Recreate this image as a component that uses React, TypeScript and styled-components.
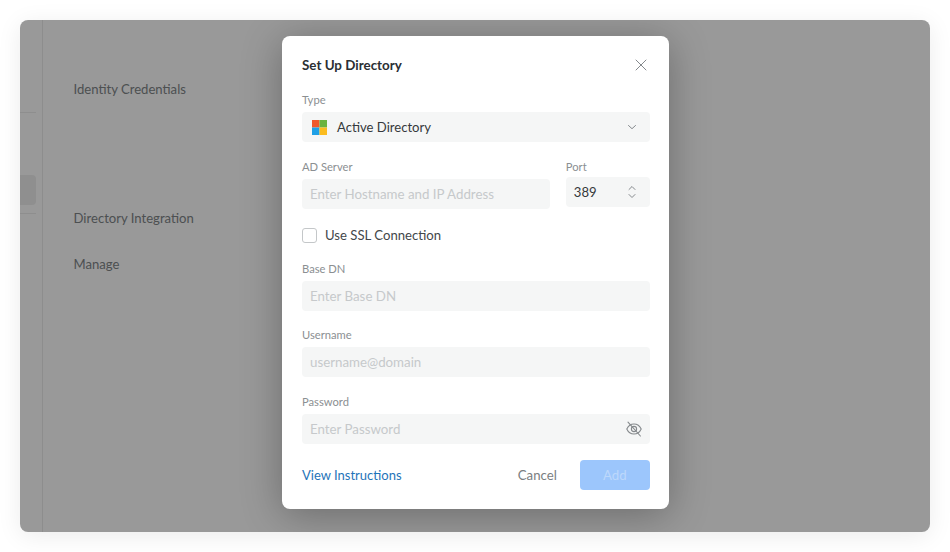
import React from "react";
import styled, { createGlobalStyle } from "styled-components";

const Global = createGlobalStyle`
  html, body { margin: 0; padding: 0; background: #fff; }
  body { font-family: "Lato", "Liberation Sans", sans-serif; }
  #root { width: 950px; height: 552px; overflow: hidden; }
`;
const Page = styled.div`
  width: 950px; height: 552px; padding: 20px; box-sizing: border-box; background: #fff;
`;
const Win = styled.div`
  position: relative; display: flex; width: 910px; height: 512px; border-radius: 8px;
  overflow: hidden; background: #fff; box-shadow: 0 4px 24px rgba(0,0,0,.08);
`;
const Sidebar = styled.aside`
  display: flex; flex-direction: column; width: 22px; flex: none; border-right: 1px solid #ececec; box-sizing: content-box;
`;
const SideRow = styled.div<{ $h: number; $line?: boolean; $active?: boolean; $mt?: number }>`
  width: 16px; height: ${p => p.$h}px; margin-top: ${p => p.$mt ?? 0}px; box-sizing: border-box; flex: none;
  border-bottom: ${p => (p.$line ? "1px solid #ededed" : "none")};
  background: ${p => (p.$active ? "#efefef" : "transparent")};
  border-radius: ${p => (p.$active ? "0 4px 4px 0" : "0")};
`;
const Content = styled.main`
  display: flex; flex-direction: column; padding: 60px 0 0 30.5px; flex: 1;
`;
const Section = styled.div<{ $mt: number }>`
  margin-top: ${p => p.$mt}px; font-size: 13.1px; line-height: 18px; color: #808588; height: 18px;
`;
const Overlay = styled.div`
  position: absolute; inset: 0; background: rgba(0,0,0,.4);
`;
const Modal = styled.div`
  position: absolute; left: 262.4px; top: 16px; width: 386.8px; height: 473px; box-sizing: border-box;
  padding: 19px 19.4px 0 19.6px; background: #fff; border-radius: 8px;
  box-shadow: 0 6px 40px rgba(0,0,0,.3); display: flex; flex-direction: column;
`;
const Header = styled.div`
  display: flex; align-items: center; justify-content: space-between; height: 20px; margin-bottom: 17px;
`;
const Title = styled.h2`
  margin: 0; font-size: 13.4px; line-height: 20px; font-weight: 700; color: #2b2f33;
`;
const IconBtn = styled.span`
  display: inline-flex; color: #85898d; line-height: 0;
`;
const CloseBtn = styled(IconBtn)`
  margin-right: 3px;
`;
const Label = styled.label`
  display: block; height: 16px; font-size: 11.2px; line-height: 16px; color: #8b8f92;
`;
const Field = styled.div<{ $gap?: number; $w?: number; $mt?: number }>`
  display: flex; flex-direction: column; gap: ${p => p.$gap ?? 4}px;
  margin-top: ${p => p.$mt ?? 0}px;
  ${p => (p.$w ? `width: ${p.$w}px; flex: none;` : "flex: 1;")}
`;
const Stack = styled.div`
  display: flex; flex-direction: column; gap: 16px;
`;
const Row = styled.div`
  display: flex; justify-content: space-between; align-items: flex-start; margin-top: 1px;
`;
const Box = styled.div`
  display: flex; align-items: center; height: 30px; box-sizing: border-box; padding: 0 8px; border-radius: 4px;
  background: #f5f6f6; font-size: 13.1px; color: #35393c;
`;
const Placeholder = styled.span`
  flex: 1; color: #c6c9cb; font-size: 13.3px;
`;
const Value = styled.span`
  flex: 1;
`;
const Logo = styled.svg`
  margin: 0 10px 0 2px; flex: none;
`;
const Check = styled.label`
  display: flex; align-items: center; gap: 8px; height: 20px; font-size: 13.15px; color: #43474a;
`;
const Tick = styled.span`
  width: 15px; height: 15px; box-sizing: border-box; border: 1px solid #c4c7c9; border-radius: 3px; flex: none;
`;
const Footer = styled.div`
  display: flex; align-items: center; margin-top: 16px; height: 30px;
`;
const Link = styled.a`
  flex: 1; color: #1f74b9; font-size: 13px;
`;
const Cancel = styled.button`
  border: 0; background: none; padding: 0; font: inherit; font-size: 13.2px; color: #7a7e81; margin-right: 23px;
`;
const Add = styled.button`
  width: 70px; height: 30px; border: 0; border-radius: 4px; background: #9cc6fc; color: #bcd8fb;
  font: inherit; font-size: 13.2px; padding: 0;
`;
const EndGap = styled.span<{ $w: number }>`
  width: ${p => p.$w}px; flex: none;
`;

const Chevrons = () => (
  <svg width="10" height="16" viewBox="0 0 10 16" fill="none" stroke="#85898d" strokeWidth="1" strokeLinecap="round" strokeLinejoin="round">
    <path d="M2 5.5 5 2.5l3 3" />
    <path d="M2 10.5l3 3 3-3" />
  </svg>
);
const Chevron = () => (
  <svg width="10" height="10" viewBox="0 0 10 10" fill="none" stroke="#85898d" strokeWidth="1" strokeLinecap="round" strokeLinejoin="round">
    <path d="M1.5 3.5 5 6.7l3.5-3.2" />
  </svg>
);
const Close = () => (
  <svg width="12" height="12" viewBox="0 0 12 12" fill="none" stroke="#84888c" strokeWidth="1" strokeLinecap="round">
    <path d="M1 1l10 10M11 1 1 11" />
  </svg>
);
const EyeSlash = () => (
  <svg width="16" height="16" viewBox="0 0 16 16" fill="none" stroke="#85898c" strokeWidth="1.1" strokeLinecap="round">
    <path d="M.8 8C2.3 4.7 5 3 8 3s5.7 1.7 7.2 5c-1.5 3.3-4.2 5-7.2 5S2.3 11.300.8 8Z" />
    <circle cx="8" cy="8" r="2.6" />
    <path d="M2 1.2 14.400 15" />
  </svg>
);

export default function App() {
  return (
    <Page>
      <Global />
      <Win>
        <Sidebar>
          <SideRow $h={93} $line />
          <SideRow $h={30} $active $mt={62} />
          <SideRow $h={9} $line />
        </Sidebar>
        <Content>
          <Section $mt={0}>Identity Credentials</Section>
          <Section $mt={111}>Directory Integration</Section>
          <Section $mt={28}>Manage</Section>
        </Content>
        <Overlay />
        <Modal role="dialog">
          <Header>
            <Title>Set Up Directory</Title>
            <CloseBtn><Close /></CloseBtn>
          </Header>
          <Stack>
            <Field>
              <Label>Type</Label>
              <Box>
                <Logo width="15" height="15" viewBox="0 0 15 15">
                  <rect x="0" y="0" width="7.5" height="7.5" fill="#f0592b" />
                  <rect x="7.5" y="0" width="7.5" height="7.5" fill="#6cb33f" />
                  <rect x="0" y="7.5" width="7.5" height="7.5" fill="#1fa0e6" />
                  <rect x="7.5" y="7.5" width="7.5" height="7.5" fill="#fbbc1f" />
                </Logo>
                <Value>Active Directory</Value>
                <IconBtn><Chevron /></IconBtn>
                <EndGap $w={5} />
              </Box>
            </Field>
            <Row>
              <Field $w={248}>
                <Label>AD Server</Label>
                <Box><Placeholder>Enter Hostname and IP Address</Placeholder></Box>
              </Field>
              <Field $w={84} $gap={2}>
                <Label>Port</Label>
                <Box>
                  <Value>389</Value>
                  <IconBtn><Chevrons /></IconBtn>
                  <EndGap $w={5} />
                </Box>
              </Field>
            </Row>
            <Check><Tick />Use SSL Connection</Check>
            <Field>
              <Label>Base DN</Label>
              <Box><Placeholder>Enter Base DN</Placeholder></Box>
            </Field>
            <Field>
              <Label>Username</Label>
              <Box><Placeholder>username@domain</Placeholder></Box>
            </Field>
            <Field $mt={1}>
              <Label>Password</Label>
              <Box>
                <Placeholder>Enter Password</Placeholder>
                <IconBtn><EyeSlash /></IconBtn>
              </Box>
            </Field>
          </Stack>
          <Footer>
            <Link>View Instructions</Link>
            <Cancel>Cancel</Cancel>
            <Add>Add</Add>
          </Footer>
        </Modal>
      </Win>
    </Page>
  );
}
